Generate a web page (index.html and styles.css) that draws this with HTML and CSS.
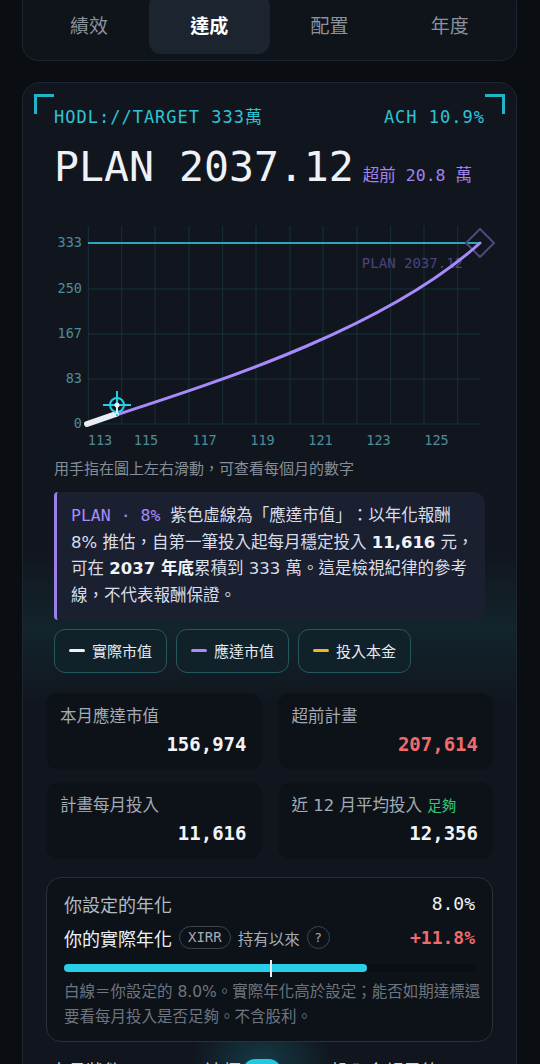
FILE: index.html
```html
<!DOCTYPE html>
<html lang="zh-Hant">
    <head>
        <meta charset="utf-8">
        <title>達成</title>
        <link rel="stylesheet" href="styles.css">
    </head>
    <body>
        <div class="page">
            <nav class="tabs">
                <div class="tab">績效</div>
                <div class="tab active">達成</div>
                <div class="tab">配置</div>
                <div class="tab">年度</div>
            </nav>

            <section class="panel">
                <span class="corner corner_left"></span>
                <span class="corner corner_right"></span>

                <div class="head">
                    <div class="head_row">
                        <span>HODL://TARGET 333萬</span>
                        <span>ACH 10.9%</span>
                    </div>
                    <div class="title_row">
                        <span class="title">PLAN 2037.12</span>
                        <span class="ahead">超前 20.8 萬</span>
                    </div>
                </div>

                <svg class="chart" width="448" height="226" viewBox="0 0 448 226">
                    <g class="grid">
                        <line x1="42" y1="63" x2="434" y2="63" />
                        <line x1="42" y1="108" x2="434" y2="108" />
                        <line x1="42" y1="153" x2="434" y2="153" />
                        <line x1="42" y1="198" x2="434" y2="198" />
                        <line x1="42.3" y1="0" x2="42.3" y2="198" />
                        <line x1="75.7" y1="0" x2="75.7" y2="198" />
                        <line x1="109" y1="0" x2="109" y2="198" />
                        <line x1="143" y1="0" x2="143" y2="198" />
                        <line x1="176.7" y1="0" x2="176.7" y2="198" />
                        <line x1="210" y1="0" x2="210" y2="198" />
                        <line x1="244" y1="0" x2="244" y2="198" />
                        <line x1="277" y1="0" x2="277" y2="198" />
                        <line x1="311" y1="0" x2="311" y2="198" />
                        <line x1="344.7" y1="0" x2="344.7" y2="198" />
                        <line x1="378" y1="0" x2="378" y2="198" />
                        <line x1="411.7" y1="0" x2="411.7" y2="198" />
                    </g>
                    <line class="target" x1="42" y1="17" x2="434" y2="17" />

                    <g class="axis_y">
                        <text x="36" y="17">333</text>
                        <text x="36" y="63">250</text>
                        <text x="36" y="108">167</text>
                        <text x="36" y="153">83</text>
                        <text x="36" y="198">0</text>
                    </g>
                    <g class="axis_x">
                        <text x="54" y="215">113</text>
                        <text x="100" y="215">115</text>
                        <text x="158.5" y="215">117</text>
                        <text x="216.5" y="215">119</text>
                        <text x="274.5" y="215">121</text>
                        <text x="332.5" y="215">123</text>
                        <text x="390.5" y="215">125</text>
                    </g>

                    <text class="plan_label" x="417" y="38">PLAN 2037.12</text>
                    <polygon class="goal" points="434,3 448,17 434,31 420,17" />

                    <path class="plan_line" d="M70 189 C184 152 342 100 434 17" />
                    <path class="actual_line" d="M41 198 L70 188" />

                    <g class="cursor">
                        <line x1="71" y1="165" x2="71" y2="190" />
                        <line x1="57" y1="179" x2="85" y2="179" />
                        <circle cx="71" cy="179" r="7" />
                    </g>
                    <line class="cursor_stem" x1="71" y1="179" x2="71" y2="188" />
                    <circle class="cursor_dot" cx="71" cy="179" r="2.5" />
                </svg>

                <p class="hint">用手指在圖上左右滑動，可查看每個月的數字</p>

                <div class="note">
                    <span class="note_tag">PLAN · 8% </span>紫色虛線為「應達市值」：以年化報酬 8% 推估，自第一筆投入起每月穩定投入 <b>11,616</b> 元，可在 <b>2037 年底</b>累積到 333 萬。這是檢視紀律的參考線，不代表報酬保證。
                </div>

                <div class="legend">
                    <div class="chip"><span class="dash dash_actual"></span>實際市值</div>
                    <div class="chip"><span class="dash dash_plan"></span>應達市值</div>
                    <div class="chip"><span class="dash dash_cost"></span>投入本金</div>
                </div>

                <div class="stats">
                    <div class="stat">
                        <div class="stat_label">本月應達市值</div>
                        <div class="stat_value">156,974</div>
                    </div>
                    <div class="stat">
                        <div class="stat_label">超前計畫</div>
                        <div class="stat_value up">207,614</div>
                    </div>
                    <div class="stat">
                        <div class="stat_label">計畫每月投入</div>
                        <div class="stat_value">11,616</div>
                    </div>
                    <div class="stat">
                        <div class="stat_label">近 12 月平均投入 <span class="ok">足夠</span></div>
                        <div class="stat_value">12,356</div>
                    </div>
                </div>

                <div class="annual">
                    <div class="annual_row">
                        <span class="annual_label">你設定的年化</span>
                        <span class="annual_value">8.0%</span>
                    </div>
                    <div class="annual_row">
                        <span class="annual_left">
                            <span class="annual_label strong">你的實際年化</span>
                            <span class="pill">XIRR</span>
                            <span class="since">持有以來</span>
                            <span class="help">?</span>
                        </span>
                        <span class="annual_value up">+11.8%</span>
                    </div>
                    <div class="bar">
                        <div class="bar_fill" style="width: 73.8%"></div>
                        <span class="bar_mark"></span>
                    </div>
                    <p class="caption">白線＝你設定的 8.0%。實際年化高於設定；能否如期達標還要看每月投入是否足夠。不含股利。</p>
                </div>

                <div class="next">
                    <span class="next_text">本月狀態</span>
                    <span class="next_text short">達標</span>
                    <span class="next_pill">OK</span>
                    <span class="next_text wide">投入金額足夠</span>
                </div>
            </section>
        </div>
    </body>
</html>
```

FILE: styles.css
```css
body {
    margin: 0;
    background-color: #0a0e13;
    color: #e6ebf0;
    font-family: "DejaVu Sans", "Noto Sans CJK TC", sans-serif;
    text-spacing-trim: space-all;
    overflow: hidden;
}

.page {
    padding: 0 23px 0 22px;
}

/* tabs */

.tabs {
    margin-top: -13px;
    display: grid;
    grid-template-columns: repeat(4, 1fr);
    padding: 6px;
    background-color: #0f141a;
    border: 1px solid #1c252f;
    border-radius: 16px;
}

.tab {
    height: 60px;
    display: flex;
    align-items: center;
    justify-content: center;
    font-size: 19px;
    color: #8a939c;
    border-radius: 12px;
}

.tab.active {
    background-color: #1b242f;
    color: #ffffff;
    font-weight: bold;
}

/* panel */

.panel {
    position: relative;
    height: 1100px;
    margin-top: 21px;
    padding: 23px 23px 0;
    border: 1px solid #1d2631;
    border-radius: 18px;
    background-color: #11161e;
    background-image:
        linear-gradient(180deg, rgba(30, 130, 140, 0) 470px, rgba(30, 130, 140, 0.13) 545px, rgba(30, 130, 140, 0) 620px),
        radial-gradient(circle 70px at 239px 985px, rgba(34, 211, 238, 0.2), rgba(34, 211, 238, 0));
}

.corner {
    position: absolute;
    top: 11px;
    width: 17px;
    height: 17px;
    border-top: 3px solid #1fb5c9;
}

.corner_left {
    left: 11px;
    border-left: 3px solid #1fb5c9;
}

.corner_right {
    right: 11px;
    border-right: 3px solid #1fb5c9;
}

.head {
    padding: 0 8px;
}

.head_row {
    display: flex;
    justify-content: space-between;
    font-family: "DejaVu Sans Mono", "Noto Sans CJK TC", monospace;
    font-size: 17px;
    letter-spacing: 1px;
    line-height: 22px;
    color: #2ec3d6;
}

.title_row {
    display: flex;
    align-items: baseline;
    margin-top: 18px;
}

.title {
    font-family: "DejaVu Sans Mono", monospace;
    font-size: 41.5px;
    line-height: 42px;
    color: #eef2f6;
}

.ahead {
    margin-left: 9px;
    font-family: "DejaVu Sans Mono", "Noto Sans CJK TC", monospace;
    font-size: 16.5px;
    color: #a084ec;
}

/* chart */

.chart {
    display: block;
    margin-top: 38px;
    overflow: visible;
}

.grid line {
    stroke: #16303a;
    stroke-width: 1;
}

.target {
    stroke: #2aa7b8;
    stroke-width: 2;
}

.axis_y text,
.axis_x text {
    font-family: "DejaVu Sans Mono", monospace;
    font-size: 13.5px;
    fill: #4d8c99;
    dominant-baseline: middle;
}

.axis_y text {
    text-anchor: end;
}

.axis_x text {
    text-anchor: middle;
}

.plan_label {
    font-family: "DejaVu Sans Mono", monospace;
    font-size: 14px;
    fill: #4a4380;
    text-anchor: end;
    dominant-baseline: middle;
}

.goal {
    fill: none;
    stroke: #4f4680;
    stroke-width: 2;
}

.plan_line {
    fill: none;
    stroke: #a78bfa;
    stroke-width: 3;
    stroke-linecap: round;
}

.actual_line {
    fill: none;
    stroke: #e8eef4;
    stroke-width: 6;
    stroke-linecap: round;
}

.cursor line,
.cursor circle {
    fill: none;
    stroke: #22cfe6;
    stroke-width: 2;
}

.cursor_stem {
    stroke: #e8eef4;
    stroke-width: 2;
}

.cursor_dot {
    fill: #e8eef4;
}

.hint {
    margin: 7px 8px 0;
    font-size: 15px;
    line-height: 20px;
    color: #858e98;
}

/* note */

.note {
    margin: 13px 8px 0;
    padding: 11px 5px 10px 14px;
    background-color: #1b2031;
    border-left: 3px solid #9b7fe8;
    border-radius: 4px 12px 12px 4px;
    font-size: 16.5px;
    line-height: 26.7px;
    color: #d9dde8;
}

.note_tag {
    font-family: "DejaVu Sans Mono", monospace;
    color: #a78bfa;
}

.note b {
    color: #f2f4f8;
}

/* legend */

.legend {
    display: flex;
    gap: 9px;
    margin: 9px 8px 0;
}

.chip {
    box-sizing: border-box;
    width: 113px;
    height: 44px;
    display: flex;
    align-items: center;
    gap: 7px;
    padding: 0 14px;
    border: 1px solid #25575d;
    border-radius: 11px;
    background-color: #10212a;
    font-size: 15px;
    color: #e6ebf0;
}

.dash {
    width: 16px;
    height: 3px;
    border-radius: 2px;
}

.dash_actual {
    background-color: #eef3f7;
}

.dash_plan {
    background-color: #a78bfa;
}

.dash_cost {
    background-color: #f0b429;
}

/* stats */

.stats {
    display: grid;
    grid-template-columns: 1fr 1fr;
    gap: 12px 16px;
    margin-top: 20px;
}

.stat {
    padding: 13px 15px 14px 14px;
    border-radius: 13px;
    background-color: #0d1218;
}

.stat_label {
    font-size: 16.5px;
    line-height: 22px;
    color: #a3abb5;
}

.ok {
    font-size: 14.5px;
    color: #34c77b;
}

.stat_value {
    margin-top: 4px;
    font-family: "DejaVu Sans Mono", monospace;
    font-weight: bold;
    font-size: 19px;
    line-height: 24px;
    text-align: right;
    color: #f1f4f7;
}

.stat_value.up {
    color: #f06b6b;
}

/* annual */

.annual {
    margin-top: 18px;
    padding: 13px 17px 11px;
    border: 1px solid #27313c;
    border-radius: 15px;
    background-color: #0d1218;
}

.annual_row {
    height: 26px;
    display: flex;
    align-items: center;
    justify-content: space-between;
}

.annual_row + .annual_row {
    margin-top: 8px;
}

.annual_left {
    display: flex;
    align-items: center;
    gap: 7px;
}

.annual_label {
    font-size: 18px;
    color: #b2bac3;
}

.annual_label.strong {
    color: #eef2f6;
}

.annual_value {
    font-family: "DejaVu Sans Mono", monospace;
    font-size: 18px;
    color: #eef2f6;
}

.annual_value.up {
    font-weight: bold;
    color: #f06b6b;
}

.pill {
    box-sizing: border-box;
    height: 23px;
    padding: 0 8px;
    border: 1px solid #3a4550;
    border-radius: 12px;
    font-family: "DejaVu Sans Mono", monospace;
    font-size: 14px;
    line-height: 21px;
    color: #a3abb5;
}

.since {
    font-size: 15.5px;
    color: #a3abb5;
}

.help {
    box-sizing: border-box;
    width: 23px;
    height: 23px;
    display: flex;
    align-items: center;
    justify-content: center;
    border: 1px solid #3a4550;
    border-radius: 50%;
    font-size: 13px;
    color: #a3abb5;
}

.bar {
    position: relative;
    height: 8px;
    margin-top: 13px;
    border-radius: 4px;
    background-color: #0a0e13;
}

.bar_fill {
    height: 100%;
    border-radius: 4px;
    background-color: #27d0e8;
}

.bar_mark {
    position: absolute;
    left: 206px;
    top: -4px;
    width: 2px;
    height: 17px;
    background-color: #e8eef4;
}

.caption {
    margin: 8.5px -9px 0 0;
    font-size: 15.5px;
    line-height: 25px;
    color: #6c7580;
}

/* next row, cut off by the window */

.next {
    display: flex;
    align-items: center;
    margin-top: 17px;
    padding-left: 4px;
    font-size: 18px;
    line-height: 26px;
    color: #c9d0d8;
}

.next_text.short {
    margin-left: 83px;
}

.next_pill {
    margin-left: 2px;
    padding: 0 6px;
    border-radius: 12px;
    background-color: #22c8e0;
    color: #0a0e13;
}

.next_text.wide {
    margin-left: 50px;
}
```
